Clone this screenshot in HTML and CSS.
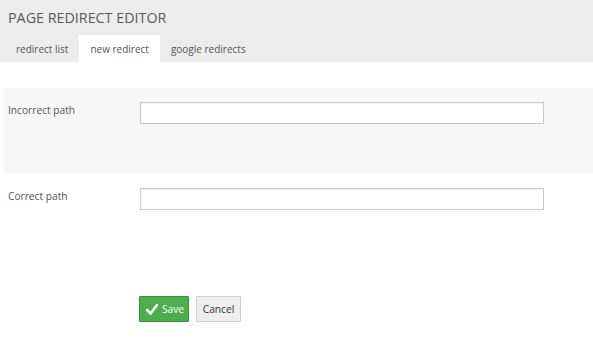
FILE: index.html
```html
<!DOCTYPE html>
<html>
<head>
<meta charset="utf-8">
<link rel="stylesheet" href="styles.css">
</head>
<body>
<div class="header">
  <h1 class="title">PAGE REDIRECT EDITOR</h1>
  <ul class="tabs">
    <li class="tab">redirect list</li>
    <li class="tab active">new redirect</li>
    <li class="tab">google redirects</li>
  </ul>
</div>
<form class="form">
  <div class="row shaded">
    <label class="label">Incorrect path</label>
    <input class="field" type="text">
  </div>
  <div class="row">
    <label class="label">Correct path</label>
    <input class="field" type="text">
  </div>
  <div class="actions">
    <button type="button" class="btn btn-save"><svg class="check" width="12" height="11" viewBox="0 0 12 11"><path d="M1 6 L4.5 9.5 L11 1" fill="none" stroke="#fff" stroke-width="2.6" stroke-linecap="round" stroke-linejoin="round"/></svg>Save</button>
    <button type="button" class="btn btn-cancel">Cancel</button>
  </div>
</form>
</body>
</html>
```

FILE: styles.css
```css
* { box-sizing: border-box; }
body {
  margin: 0;
  font-family: "Open Sans", "Liberation Sans", sans-serif;
  background: #fff;
  color: #555;
}
.header {
  background: #ececec;
  height: 62px;
  display: flex;
  flex-direction: column;
}
.title {
  margin: 0;
  padding: 8px 0 0 8px;
  height: 35px;
  font-size: 14.3px;
  font-weight: 400;
  color: #5a5a5a;
  line-height: 20px;
}
.tabs {
  list-style: none;
  margin: 0;
  padding: 0 0 0 5px;
  display: flex;
  height: 27px;
}
.tab {
  padding: 2px 11px 0;
  font-size: 10px;
  line-height: 25px;
  color: #555;
}
.tab.active {
  background: #fff;
}
.form {
  margin-top: 26px;
  padding-left: 4px;
}
.row {
  display: flex;
  align-items: flex-start;
  height: 86px;
  padding-top: 14px;
}
.row.shaded {
  background: #f7f7f7;
}
.label {
  width: 136px;
  padding: 1px 0 0 4px;
  font-size: 10.2px;
  color: #555;
  line-height: 14px;
}
.field {
  width: 404px;
  height: 22px;
  margin: 0;
  border: 1px solid #c8c8c8;
  box-shadow: inset 0 1px 1px rgba(0,0,0,0.06);
  background: #fff;
  padding: 0 4px;
  font: inherit;
}
.actions {
  display: flex;
  gap: 7px;
  padding: 36px 0 0 135px;
}
.btn {
  height: 26px;
  font-family: "Open Sans", "Liberation Sans", sans-serif;
  font-size: 10.2px;
  padding: 0 6px;
  border-radius: 1px;
  display: flex;
  align-items: center;
  gap: 4px;
}
.btn-save {
  background: #4cae4c;
  border: 1px solid #3d8b3d;
  color: #fff;
  width: 50px;
}
.btn-cancel {
  background: #eeeeee;
  border: 1px solid #cfcfcf;
  color: #333;
  width: 45px;
  justify-content: center;
}
.check { flex: none; }
```
